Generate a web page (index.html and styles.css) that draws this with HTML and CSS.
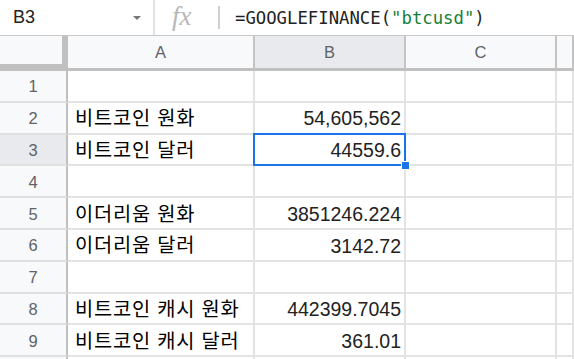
FILE: index.html
```html
<!DOCTYPE html>
<html lang="ko">
<head>
  <meta charset="UTF-8">
  <title>시트</title>
  <link rel="stylesheet" href="styles.css">
</head>
<body>
  <div class="formula-bar">
    <div class="name-box">
      <span class="cell-ref">B3</span>
      <span class="arrow"></span>
    </div>
    <div class="fx">fx</div>
    <div class="formula">=GOOGLEFINANCE(<span class="str">"btcusd"</span>)</div>
  </div>

  <div class="sheet">
    <!-- 헤더 -->
    <div class="corner"></div>
    <div class="col-head">A</div>
    <div class="col-head active">B</div>
    <div class="col-head">C</div>
    <div class="col-head"></div>

    <div class="row-head">1</div><div class="cell"></div><div class="cell"></div><div class="cell"></div><div class="cell"></div>
    <div class="row-head">2</div><div class="cell">비트코인 원화</div><div class="cell num">54,605,562</div><div class="cell"></div><div class="cell"></div>
    <div class="row-head active">3</div><div class="cell">비트코인 달러</div><div class="cell num selected">44559.6<span class="handle"></span></div><div class="cell"></div><div class="cell"></div>
    <div class="row-head">4</div><div class="cell"></div><div class="cell"></div><div class="cell"></div><div class="cell"></div>
    <div class="row-head">5</div><div class="cell">이더리움 원화</div><div class="cell num">3851246.224</div><div class="cell"></div><div class="cell"></div>
    <div class="row-head">6</div><div class="cell">이더리움 달러</div><div class="cell num">3142.72</div><div class="cell"></div><div class="cell"></div>
    <div class="row-head">7</div><div class="cell"></div><div class="cell"></div><div class="cell"></div><div class="cell"></div>
    <div class="row-head">8</div><div class="cell">비트코인 캐시 원화</div><div class="cell num">442399.7045</div><div class="cell"></div><div class="cell"></div>
    <div class="row-head">9</div><div class="cell">비트코인 캐시 달러</div><div class="cell num">361.01</div><div class="cell"></div><div class="cell"></div>
    <div class="row-head"></div><div class="cell"></div><div class="cell"></div><div class="cell"></div><div class="cell"></div>
  </div>
</body>
</html>
```

FILE: styles.css
```css
body {
  margin: 0;
  height: 359px;
  overflow: hidden;
  background: #fff;
  font-family: 'Liberation Sans', 'Noto Sans CJK KR', sans-serif;
}

/* 수식 입력줄 */
.formula-bar {
  display: flex;
  align-items: center;
  height: 35px;
  border-bottom: 1px solid #c7c7c7;
}

.name-box {
  display: flex;
  align-items: center;
  justify-content: space-between;
  width: 155px;
  height: 35px;
  padding: 0 12px 0 13px;
  box-sizing: border-box;
  border-right: 2px solid #e3e3e3;
}

.cell-ref {
  font-size: 18px;
  color: #222;
}

.arrow {
  width: 0;
  height: 0;
  border-left: 4px solid transparent;
  border-right: 4px solid transparent;
  border-top: 4px solid #777;
  margin-top: 1px;
}

.fx {
  width: 65px;
  height: 23px;
  border-right: 2px solid #d0d0d0;
  box-sizing: border-box;
  padding-left: 17px;
  font-family: 'Liberation Serif', serif;
  font-style: italic;
  font-size: 27px;
  line-height: 20px;
  color: #b8b8b8;
}

.formula {
  padding-left: 15px;
  font-family: 'DejaVu Sans Mono', monospace;
  font-size: 17.3px;
  color: #222;
}

.formula .str {
  color: #188038;
}

/* 시트 */
.sheet {
  display: grid;
  grid-template-columns: 68px 187px 151px 151px 1fr;
  grid-template-rows: 35px repeat(10, 31.8px);
}

.corner {
  background: #f8f9fa;
  border-right: 6px solid #c0c0c0;
  border-bottom: 7px solid #c0c0c0;
}

.col-head {
  display: flex;
  align-items: center;
  justify-content: center;
  background: #f8f9fa;
  border-right: 2px solid #c4c4c4;
  border-bottom: 3px solid #c0c0c0;
  font-size: 16.5px;
  color: #5f6368;
}

.row-head {
  display: flex;
  align-items: center;
  justify-content: center;
  background: #f8f9fa;
  border-right: 2px solid #c0c0c0;
  border-bottom: 2px solid #e0e0e0;
  font-size: 16.5px;
  color: #5f6368;
  padding-top: 2px;
}

.col-head.active,
.row-head.active {
  background: #e8eaed;
}

.cell {
  display: flex;
  align-items: center;
  padding: 3px 3px 0 7px;
  border-right: 2px solid #e2e3e3;
  border-bottom: 2px solid #e2e3e3;
  font-size: 19.8px;
  letter-spacing: 0.8px;
  line-height: 1;
  color: #000;
  white-space: nowrap;
  position: relative;
}

.cell.num {
  justify-content: flex-end;
  font-size: 19.5px;
  letter-spacing: 0;
  color: #222;
}

.cell.selected::after {
  content: '';
  position: absolute;
  top: -2px;
  left: -2px;
  right: -2px;
  bottom: -2px;
  border: 2px solid #1a73e8;
}

.handle {
  position: absolute;
  right: -6px;
  bottom: -6px;
  width: 7px;
  height: 7px;
  background: #1a73e8;
  border: 1px solid #fff;
  z-index: 2;
}
```
